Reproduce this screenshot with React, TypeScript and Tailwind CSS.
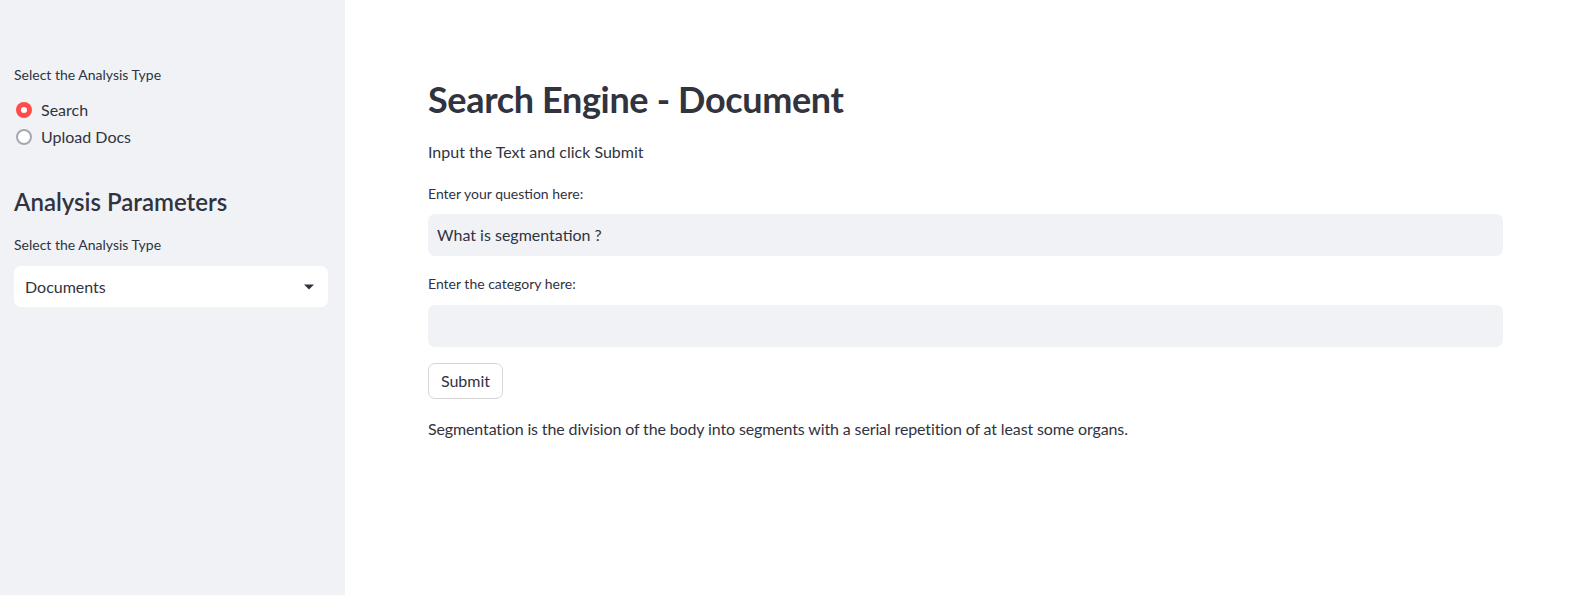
import React from "react";

export default function App() {
  return (
    <div
      className="flex h-[595px] w-[1586px] overflow-hidden bg-white text-[#31333f]"
      style={{ fontFamily: "Lato, 'Liberation Sans', sans-serif" }}
    >
      {/* Sidebar */}
      <aside className="w-[345px] shrink-0 bg-[#f0f2f6] pl-[14px] pr-[17px]">
        <div className="mt-[65px] h-[20px] text-[14px] leading-[20px]">Select the Analysis Type</div>
        <div className="mt-[11px] flex flex-col">
          <label className="flex h-[27px] items-center gap-[9px]">
            <span className="ml-[2px] flex h-[16px] w-[16px] items-center justify-center rounded-full bg-[#ff4b4b]">
              <span className="h-[6px] w-[6px] rounded-full bg-white" />
            </span>
            <span className="text-[16px] leading-[20px]">Search</span>
          </label>
          <label className="flex h-[27px] items-center gap-[9px]">
            <span className="ml-[2px] h-[16px] w-[16px] rounded-full border-2 border-[#a3a8b4] bg-white" />
            <span className="text-[16px] leading-[20px]">Upload Docs</span>
          </label>
        </div>
        <h2 className="mt-[37px] h-[30px] text-[24px] font-semibold leading-[30px]">Analysis Parameters</h2>
        <div className="mt-[18px] h-[20px] text-[14px] leading-[20px]">Select the Analysis Type</div>
        <div className="mt-[11px] flex h-[41px] items-center justify-between rounded-[7px] bg-white pl-[11px] pr-[13px]">
          <span className="text-[16px]">Documents</span>
          <svg width="12" height="8" viewBox="0 0 12 8">
            <path d="M1 1.5h10L6 6.5z" fill="#31333f" />
          </svg>
        </div>
      </aside>

      {/* Main */}
      <main className="flex-1 px-[83px]">
        <h1 className="mt-[76px] h-[46px] text-[36px] font-bold leading-[46px] tracking-[-0.35px]">
          Search Engine - Document
        </h1>
        <p className="mt-[19px] h-[22px] text-[16px] leading-[22px]">Input the Text and click Submit</p>
        <div className="mt-[21px] h-[20px] text-[14px] leading-[20px]">Enter your question here:</div>
        <div className="mt-[10px] flex h-[42px] items-center rounded-[7px] bg-[#f0f2f6] px-[9px] text-[16px]">
          What is segmentation ?
        </div>
        <div className="mt-[18px] h-[20px] text-[14px] leading-[20px]">Enter the category here:</div>
        <div className="mt-[11px] h-[42px] rounded-[7px] bg-[#f0f2f6]" />
        <button className="mt-[16px] flex h-[36px] w-[75px] items-center justify-center rounded-[7px] border border-[#d6d6d9] bg-white text-[16px]">
          Submit
        </button>
        <p className="mt-[19px] h-[22px] text-[16px] leading-[22px] tracking-[-0.13px]">
          Segmentation is the division of the body into segments with a serial repetition of at least some organs.
        </p>
      </main>
    </div>
  );
}
